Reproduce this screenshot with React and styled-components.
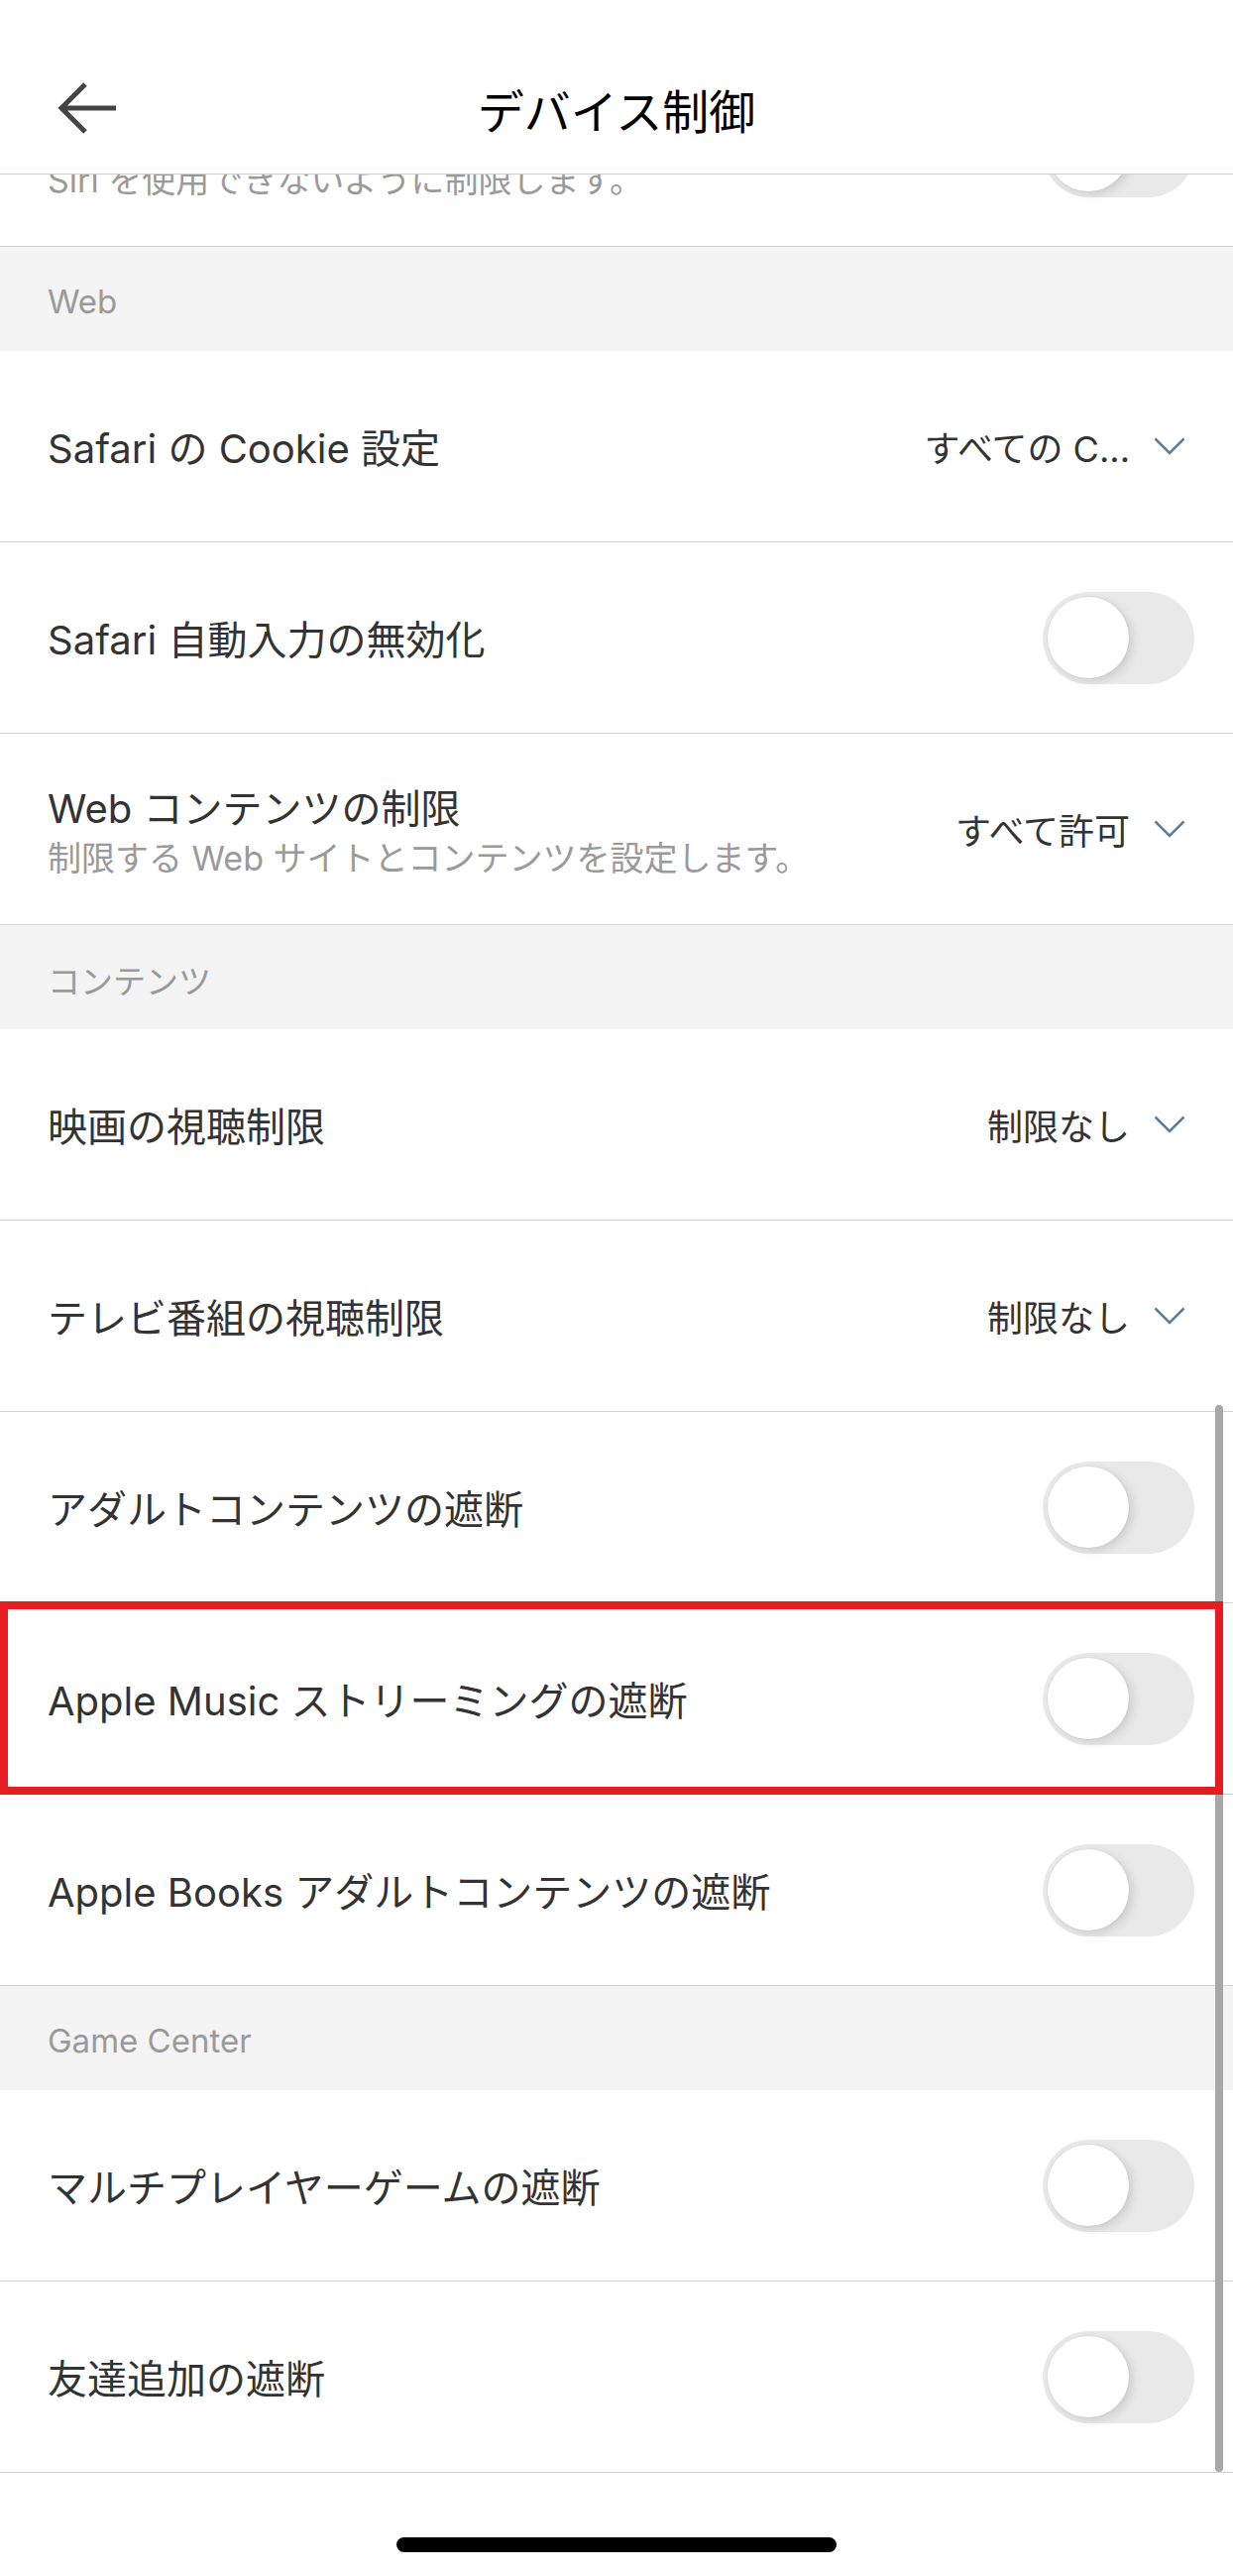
import React from "react";
import styled, { createGlobalStyle } from "styled-components";

const GlobalStyle = createGlobalStyle`
  html, body {
    margin: 0;
    padding: 0;
    background: #ffffff;
  }
  * {
    box-sizing: border-box;
  }
`;

const sections = [
  {
    items: [
      {
        label: "Siri",
        sub: "Siri を使用できないように制限します。",
        type: "toggle",
      },
    ],
  },
  {
    title: "Web",
    items: [
      { label: "Safari の Cookie 設定", type: "select", value: "すべての C..." },
      { label: "Safari 自動入力の無効化", type: "toggle" },
      {
        label: "Web コンテンツの制限",
        sub: "制限する Web サイトとコンテンツを設定します。",
        type: "select",
        value: "すべて許可",
      },
    ],
  },
  {
    title: "コンテンツ",
    items: [
      { label: "映画の視聴制限", type: "select", value: "制限なし" },
      { label: "テレビ番組の視聴制限", type: "select", value: "制限なし" },
      { label: "アダルトコンテンツの遮断", type: "toggle" },
      { label: "Apple Music ストリーミングの遮断", type: "toggle", marked: true },
      { label: "Apple Books アダルトコンテンツの遮断", type: "toggle" },
    ],
  },
  {
    title: "Game Center",
    items: [
      { label: "マルチプレイヤーゲームの遮断", type: "toggle" },
      { label: "友達追加の遮断", type: "toggle" },
    ],
  },
];

const BackArrow = () => (
  <svg width="62" height="56" viewBox="0 0 62 56" fill="none">
    <path
      d="M59 28H5M28 4L4 28l24 24"
      stroke="#444444"
      strokeWidth="5"
      strokeLinecap="butt"
      strokeLinejoin="miter"
    />
  </svg>
);

const Chevron = () => (
  <svg width="32" height="18" viewBox="0 0 32 18" fill="none">
    <polyline
      points="1.5,1.5 16,16 30.5,1.5"
      stroke="#5d7d99"
      strokeWidth="2.6"
      fill="none"
    />
  </svg>
);

const App = () => {
  return (
    <>
      <GlobalStyle />
      <Page>
        <Header>
          <BackButton aria-label="back">
            <BackArrow />
          </BackButton>
          <Title>デバイス制御</Title>
          <span />
        </Header>
        <Viewport>
          <List>
            {sections.map((section, i) => (
              <React.Fragment key={i}>
                {section.title && <SectionHead>{section.title}</SectionHead>}
                {section.items.map((item) => (
                  <Row key={item.label} marked={item.marked}>
                    <Texts>
                      <Label>{item.label}</Label>
                      {item.sub && <Sub>{item.sub}</Sub>}
                    </Texts>
                    {item.type === "toggle" ? (
                      <Switch>
                        <Knob />
                      </Switch>
                    ) : (
                      <Select>
                        <Value>{item.value}</Value>
                        <Chevron />
                      </Select>
                    )}
                  </Row>
                ))}
              </React.Fragment>
            ))}
          </List>
          <ScrollThumb />
        </Viewport>
        <Footer>
          <HomeIndicator />
        </Footer>
      </Page>
    </>
  );
};

export default App;

const Page = styled.div`
  width: 1244px;
  height: 2598px;
  display: flex;
  flex-direction: column;
  overflow: hidden;
  background: #ffffff;
  font-family: Inter, "Noto Sans CJK JP", sans-serif;
`;

const Header = styled.header`
  flex-shrink: 0;
  height: 176px;
  padding-top: 44px;
  display: grid;
  grid-template-columns: 1fr auto 1fr;
  align-items: center;
  align-content: start;
  grid-template-rows: 130px;
  border-bottom: 1.5px solid #cfcfcf;
  background: #ffffff;
  position: relative;
  z-index: 3;
`;

const BackButton = styled.button`
  justify-self: start;
  margin-left: 58px;
  padding: 0;
  border: none;
  background: none;
  display: flex;
`;

const Title = styled.h1`
  margin: 0;
  font-size: 47px;
  font-weight: 400;
  color: #000000;
  letter-spacing: 0;
`;

const Viewport = styled.main`
  flex: 1;
  position: relative;
  overflow: hidden;
`;

const List = styled.div`
  margin-top: -120px;
  display: flex;
  flex-direction: column;
`;

const SectionHead = styled.div`
  height: 105px;
  display: flex;
  align-items: center;
  padding: 4px 48px 0;
  background: #f4f4f4;
  color: #9a9a9a;
  font-size: 33px;
`;

const Row = styled.div`
  position: relative;
  height: 193px;
  display: flex;
  align-items: center;
  justify-content: space-between;
  padding: 0 39px 0 48px;
  border-bottom: 1.5px solid #d2d2d2;
  background: #ffffff;

  ${(props) =>
    props.marked &&
    `
    &::after {
      content: "";
      position: absolute;
      top: -2px;
      left: 0;
      right: 10px;
      bottom: -1px;
      border: 8px solid #e41d20;
      pointer-events: none;
      z-index: 2;
    }
  `}
`;

const Texts = styled.div`
  display: flex;
  flex-direction: column;
  padding-top: 6px;
`;

const Label = styled.div`
  font-size: 40px;
  line-height: 1.3;
  color: #333333;
`;

const Sub = styled.div`
  margin-top: 2px;
  font-size: 34px;
  line-height: 1.3;
  color: #9a9a9a;
`;

const Select = styled.div`
  display: flex;
  align-items: center;
  gap: 24px;
  margin-right: 9px;
`;

const Value = styled.span`
  font-size: 36px;
  color: #333333;
`;

const Switch = styled.div`
  width: 153px;
  height: 93px;
  border-radius: 47px;
  background: #e9e9ea;
  display: flex;
  align-items: center;
  padding-left: 5px;
`;

const Knob = styled.div`
  width: 82px;
  height: 82px;
  border-radius: 50%;
  background: #ffffff;
  box-shadow: 4px 3px 10px rgba(0, 0, 0, 0.12), 0 0 0 1px rgba(0, 0, 0, 0.03);
`;

const ScrollThumb = styled.div`
  position: absolute;
  top: 1241px;
  right: 10px;
  width: 8px;
  height: 1076px;
  border-radius: 4px;
  background: #a8a8a8;
  z-index: 1;
`;

const Footer = styled.footer`
  flex-shrink: 0;
  height: 103px;
  display: flex;
  justify-content: center;
  padding-top: 64px;
`;

const HomeIndicator = styled.div`
  width: 444px;
  height: 15px;
  border-radius: 8px;
  background: #000000;
`;
